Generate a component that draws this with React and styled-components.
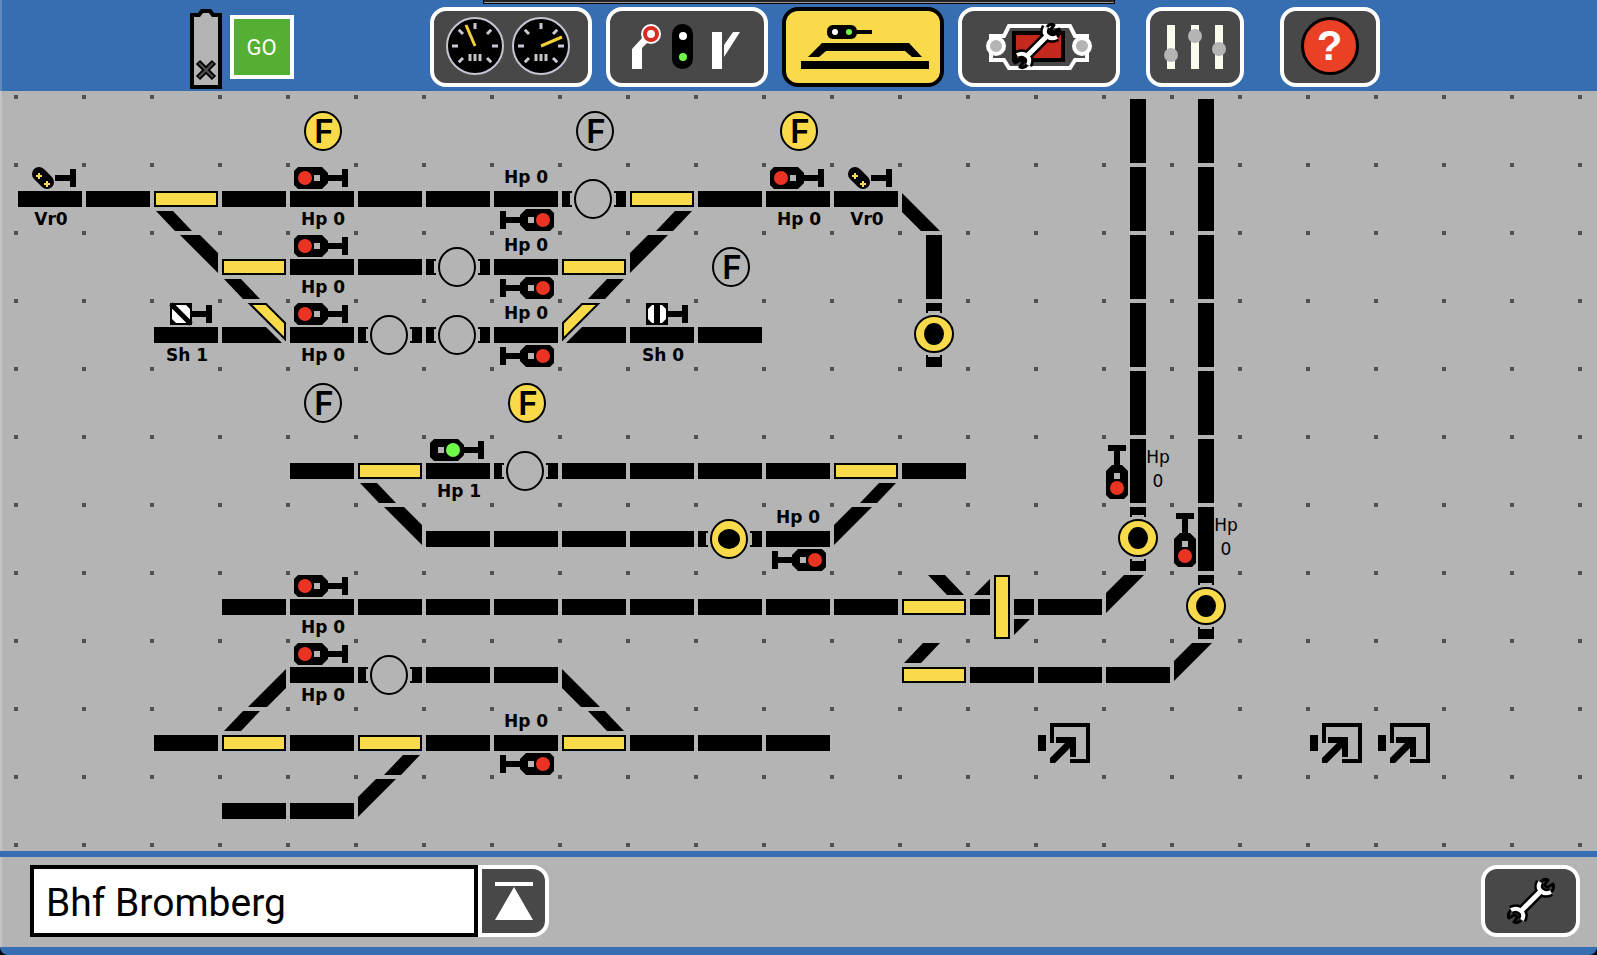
import { useState } from "react";
import styled, { createGlobalStyle } from "styled-components";

const colors = {
  blue: "#376eb1",
  gray: "#b4b4b4",
  dark: "#484848",
  yellow: "#f8da4b",
  red: "#ea3323",
  green: "#6ef84a",
};

const GlobalStyle = createGlobalStyle`
  * {
    box-sizing: border-box;
  }
  body {
    margin: 0;
    background-color: black;
    font-family: "DejaVu Sans", sans-serif;
  }
`

const Screen = styled.div`
  min-height: 100vh;
  display: flex;
  flex-direction: column;
  overflow: hidden;
  background-color: ${colors.gray};
  border-bottom: 8px solid ${colors.blue};
  border-radius: 0 0 8px 8px;
  box-shadow: inset 2px 0 0 rgba(255,255,255,0.2);
`

const Header = styled.header`
  position: relative;
  height: 91px;
  display: flex;
  justify-content: center;
  padding: 7px 28px 0 0;
  background-color: ${colors.blue};
  box-shadow: inset 2px 0 0 rgba(255,255,255,0.2);
`

const Notch = styled.div`
  position: absolute;
  top: 0;
  left: 50%;
  width: 632px;
  height: 4px;
  margin-left: -316px;
  background-color: #222;
  border: 1px solid black;
  border-top: none;
  box-shadow: inset 0 -1px 0 #999;
`

const Status = styled.div`
  display: flex;
  gap: 8px;
  margin-right: 136px;
`

const Battery = styled.svg`
  width: 32px;
  height: 80px;
  margin-top: 2px;
`

const GoButton = styled.button`
  width: 64px;
  height: 64px;
  margin-top: 8px;
  padding: 0;
  background-color: #54af33;
  color: white;
  border: 4px solid white;
  font-family: Roboto, sans-serif;
  font-size: 22px;
  cursor: pointer;
`

const Tabs = styled.nav`
  display: flex;
  gap: 14px;
`

const Tools = styled.div`
  display: flex;
  gap: 36px;
  margin-left: 26px;
`

const IconButton = styled.button`
  width: ${props => props.$width}px;
  height: ${props => props.$height || 80}px;
  display: flex;
  justify-content: center;
  align-items: center;
  flex-shrink: 0;
  padding: 0;
  background-color: ${props => props.$active ? colors.yellow : colors.dark};
  border: 4px solid ${props => props.$active ? "black" : "white"};
  border-radius: ${props => props.$attached ? "0 16px 16px 0" : "16px"};
  cursor: pointer;
`

const HelpMark = styled.span`
  width: 58px;
  height: 58px;
  display: flex;
  justify-content: center;
  align-items: center;
  margin-bottom: 2px;
  background-color: #ea4026;
  color: white;
  border: 3px solid black;
  border-radius: 50%;
  font-size: 42px;
  font-weight: bold;
  line-height: 1;
`

const Yard = styled.main`
  flex: 1;
  display: grid;
  grid-auto-columns: 68px;
  grid-auto-rows: 68px;
  padding: 4px 0 8px 14px;
  overflow: hidden;
  background-image: conic-gradient(at 4px 4px, transparent 270deg, #505050 0);
  background-size: 68px 68px;
  background-position: 14px 4px;
`

const Tile = styled.div`
  display: grid;
  grid-column: ${props => props.$col + 1};
  grid-row: ${props => props.$row + 1};
  width: 68px;
  height: 68px;
  padding: 0;
  background: none;
  border: none;
  color: black;
`

const TileButton = styled(Tile)`
  cursor: pointer;
`

const Drawing = styled.svg`
  grid-area: 1 / 1;
  width: 68px;
  height: 68px;
  overflow: visible;
`

const Label = styled.span`
  grid-area: 1 / 1;
  align-self: ${props => props.$top ? "start" : "end"};
  padding: ${props => props.$top ? "4px 0 0 4px" : "0 0 2px 6px"};
  text-align: center;
  font-family: "DejaVu Sans", sans-serif;
  font-size: 17px;
  font-weight: bold;
  line-height: 20px;
  white-space: nowrap;
`

const SideLabel = styled.span`
  grid-area: 1 / 1;
  align-self: start;
  justify-self: end;
  width: 24px;
  padding-top: 10px;
  text-align: center;
  font-family: "DejaVu Sans", sans-serif;
  font-size: 17px;
  line-height: 24px;
`

const KeyLetter = styled.span`
  grid-area: 1 / 1;
  place-self: center;
  padding: 4px 0 0 8px;
  font-family: Inter, sans-serif;
  font-size: 33px;
  font-weight: 600;
  line-height: 40px;
`

const Footer = styled.footer`
  height: 96px;
  display: flex;
  align-items: flex-start;
  padding: 8px 17px 0 30px;
  border-top: 6px solid ${colors.blue};
`

const NameInput = styled.input`
  width: 448px;
  height: 72px;
  padding: 4px 12px 0;
  background-color: white;
  color: black;
  border: 4px solid black;
  border-radius: 0;
  outline: none;
  font-family: Roboto, sans-serif;
  font-size: 39px;
`

const Spacer = styled.div`
  flex: 1;
`

function Disc({ x, y, width, height, fill }) {
  return (
    <ellipse
      cx={x + width / 2}
      cy={y + height / 2}
      rx={width / 2 - 1}
      ry={height / 2 - 1}
      fill={fill || "black"}
      stroke="black"
      strokeWidth="2"
    />
  )
}

const Mast = () => <path d="M41 12H56V6H62V24H56V18H41Z" />

function MainSignal({ green }) {
  return (
    <g>
      <path d="M12 4H36L42 10V20L36 26H12L8 22V8Z" />
      <Mast />
      <rect x={green ? 16 : 28} y="12" width="6" height="6" fill={colors.gray} />
      <circle cx={green ? 31 : 19} cy="15" r="7" fill={green ? colors.green : colors.red} />
    </g>
  )
}

function DistantSignal() {
  return (
    <g>
      <path d="M25 11L33 19" stroke="black" strokeWidth="14" strokeLinecap="round" />
      <path d="M22 13h6M25 10v6M30 21h6M33 18v6" stroke={colors.yellow} strokeWidth="2" />
      <Mast />
    </g>
  )
}

function ShuntSignal({ open }) {
  return (
    <g>
      <rect x="20" y="4" width="22" height="22" />
      <path d="M26 6H36L40 10V20L36 24H26L22 20V10Z" fill="white" />
      {open
        ? <path d="M21 5L41 25" stroke="black" strokeWidth="5" />
        : <path d="M31 5V25" stroke="black" strokeWidth="6" />}
      <Mast />
    </g>
  )
}

const MIRROR = "translate(72 0) scale(-1 1)";
const FLIP = "translate(0 72) scale(1 -1)";
const ROTATE = "rotate(180 36 36)";

const track = <rect x="4" y="28" width="64" height="16" />;
const column = <rect x="28" y="4" width="16" height="64" />;
const blade = <rect x="5" y="29" width="62" height="14" fill={colors.yellow} stroke="black" strokeWidth="2" />;

const shapes = {
  track,
  column,
  switch: <g>{blade}<path d="M6 48H23L42 68H25Z" /></g>,
  slope: <path d="M30 4H50L68 22V42Z" />,
  bend: <path d="M4 30L42 68H23L4 49Z" />,
  join: (
    <g>
      <path d="M4 28H48L64 44H4Z" />
      <path d="M30 4H48L68 24V42Z" fill={colors.gray} stroke={colors.gray} strokeWidth="2" />
      <path d="M32 5H48L67 24V40Z" fill={colors.yellow} stroke="black" strokeWidth="2" />
    </g>
  ),
  slip: (
    <g>
      <path d="M4 28H24V44H4ZM48 28H68V44H48ZM8 24L24 8V24ZM48 48H64L48 64Z" />
      <rect x="29" y="5" width="14" height="62" fill={colors.yellow} stroke="black" strokeWidth="2" />
    </g>
  ),
  free: (
    <g>
      <path d="M4 28H14V30H12V42H14V44H4ZM68 28H56V30H58V42H56V44H68Z" />
      <Disc x={16} y={16} width={38} height={40} fill={colors.gray} />
    </g>
  ),
  busy: (
    <g>
      <path d="M4 28H14V30H12V42H14V44H4ZM68 28H56V30H58V42H56V44H68Z" />
      <Disc x={16} y={16} width={38} height={40} fill={colors.yellow} />
      <Disc x={24} y={26} width={22} height={20} />
    </g>
  ),
  busyColumn: (
    <g>
      <path d="M28 4V14H30V12H42V14H44V4ZM28 68V56H30V58H42V56H44V68Z" />
      <Disc x={16} y={16} width={40} height={38} fill={colors.yellow} />
      <Disc x={26} y={24} width={20} height={22} />
    </g>
  ),
  hp0: <g>{track}<MainSignal /></g>,
  hp1: <g>{track}<MainSignal green /></g>,
  hpColumn: <g>{column}<g transform="translate(0 72) rotate(-90)"><MainSignal /></g></g>,
  vr0: <g>{track}<DistantSignal /></g>,
  sh0: <g>{track}<ShuntSignal /></g>,
  sh1: <g>{track}<ShuntSignal open /></g>,
  keyOn: <Disc x={18} y={16} width={38} height={40} fill={colors.yellow} />,
  keyOff: <Disc x={18} y={16} width={38} height={40} fill={colors.gray} />,
  link: (
    <g>
      <rect x="4" y="28" width="8" height="16" />
      <path d="M18 36V18H54V54H36" fill="none" stroke="black" strokeWidth="4" />
      <path d="M22 30H42V50H36V41L21 56H16V51L31 36H22Z" />
    </g>
  ),
};

// [row, col, shape, transform, label]
const elements = [
  [0, 4, "keyOn"], [0, 8, "keyOff"], [0, 11, "keyOn"],
  [2, 10, "keyOff"], [4, 4, "keyOff"], [4, 7, "keyOn"],

  [1, 0, "vr0", null, "Vr0"], [1, 2, "switch"], [1, 4, "hp0", null, "Hp 0"],
  [1, 7, "hp0", ROTATE, "Hp 0"], [1, 8, "free"], [1, 9, "switch", MIRROR],
  [1, 11, "hp0", null, "Hp 0"], [1, 12, "vr0", null, "Vr0"], [1, 13, "bend"],

  [2, 2, "slope"], [2, 3, "switch"], [2, 4, "hp0", null, "Hp 0"], [2, 6, "free"],
  [2, 7, "hp0", ROTATE, "Hp 0"], [2, 8, "switch", MIRROR], [2, 9, "slope", MIRROR],
  [2, 13, "column"],

  [3, 2, "sh1", null, "Sh 1"], [3, 3, "join"], [3, 4, "hp0", null, "Hp 0"],
  [3, 5, "free"], [3, 6, "free"], [3, 7, "hp0", ROTATE, "Hp 0"],
  [3, 8, "join", MIRROR], [3, 9, "sh0", null, "Sh 0"], [3, 13, "busyColumn"],

  [5, 5, "switch"], [5, 6, "hp1", null, "Hp 1"], [5, 7, "free"], [5, 12, "switch", MIRROR],

  [6, 5, "slope"], [6, 10, "busy"], [6, 11, "hp0", ROTATE, "Hp 0"], [6, 12, "slope", MIRROR],

  [7, 4, "hp0", null, "Hp 0"], [7, 13, "switch", ROTATE], [7, 14, "slip"], [7, 16, "slope", MIRROR],

  [8, 3, "bend", MIRROR], [8, 4, "hp0", null, "Hp 0"], [8, 5, "free"], [8, 8, "bend"],
  [8, 13, "switch", FLIP], [8, 17, "slope", MIRROR],

  [9, 3, "switch", FLIP], [9, 5, "switch", MIRROR], [9, 7, "hp0", ROTATE, "Hp 0"],
  [9, 8, "switch", ROTATE], [9, 15, "link"], [9, 19, "link"], [9, 20, "link"],

  [10, 5, "slope", MIRROR],

  [5, 16, "hpColumn", null, "Hp 0"], [6, 16, "busyColumn"],
  [6, 17, "hpColumn", null, "Hp 0"], [7, 17, "busyColumn"],
];

// row: columns that hold a plain piece of track
const plainTracks = {
  1: [1, 3, 5, 6, 10],
  2: [5],
  3: [10],
  5: [4, 8, 9, 10, 11, 13],
  6: [6, 7, 8, 9],
  7: [3, 5, 6, 7, 8, 9, 10, 11, 12, 15],
  8: [6, 7, 14, 15, 16],
  9: [2, 4, 6, 9, 10, 11],
  10: [3, 4],
};

Object.entries(plainTracks).forEach(([row, columns]) => {
  columns.forEach((col) => elements.push([Number(row), col, "track"]));
});

for (let row = 0; row < 6; row++) {
  if (row < 5) {
    elements.push([row, 16, "column"]);
  }
  elements.push([row, 17, "column"]);
}

const passive = ["track", "column", "slope", "bend", "free", "busy", "busyColumn"];

function Element({ element }) {
  const [row, col, shape, transform, label] = element;
  const isKey = shape.startsWith("key");
  const Component = passive.includes(shape) ? Tile : TileButton;
  const buttonProps = passive.includes(shape) ? {} : { as: "button", type: "button" };
  if (!label && !isKey && buttonProps.as) {
    buttonProps["aria-label"] = shape;
  }
  return (
    <Component $row={row} $col={col} {...buttonProps}>
      <Drawing viewBox="0 0 68 68" aria-hidden="true">
        <g transform={transform || undefined}>{shapes[shape]}</g>
      </Drawing>
      {isKey && <KeyLetter>F</KeyLetter>}
      {label && shape === "hpColumn" && <SideLabel>{label}</SideLabel>}
      {label && shape !== "hpColumn" && <Label $top={transform === ROTATE}>{label}</Label>}
    </Component>
  )
}

function Wrench() {
  const jaw = "M33 5Q30 11 34 14Q38 18 44 15";
  const hooks = "M34 5Q37 1 41 3L38 7Q38 10 41 10L46 7Q48 11 44 15";
  return (
    <g fill="none" strokeLinejoin="round">
      <g stroke="black">
        <path d="M14 34L34 14" strokeWidth="10" />
        <path d={jaw} strokeWidth="9" />
        <path d={jaw} strokeWidth="9" transform="rotate(180 24 24)" />
        <path d={hooks} strokeWidth="3" />
        <path d={hooks} strokeWidth="3" transform="rotate(180 24 24)" />
      </g>
      <g stroke="white" strokeWidth="4">
        <path d="M14 34L34 14" strokeWidth="5" />
        <path d={jaw} />
        <path d={jaw} transform="rotate(180 24 24)" />
      </g>
    </g>
  )
}

function Gauge({ x, needle }) {
  return (
    <g transform={`translate(${x} 39)`}>
      <circle r="28" fill="black" stroke="#c4c4d2" strokeWidth="2" />
      {[-135, -90, -45, 0, 45, 90, 135].map((angle) => (
        <path key={angle} d="M0 -23V-17" stroke="#c8c8d4" strokeWidth="3" transform={`rotate(${angle})`} />
      ))}
      <path d="M-5 8V15M0 8V15M5 8V15" stroke="#c4c4c4" strokeWidth="3" />
      <path d={`M0 0L${needle}`} stroke="#f3cf35" strokeWidth="3" />
    </g>
  )
}

const tabs = [
  {
    id: "drive",
    icon: <g><Gauge x={45} needle="-9 -21" /><Gauge x={111} needle="21 -9" /></g>
  },
  {
    id: "accessories",
    icon: (
      <g>
        <path d="M26 42L37 30L42 35L36 41V62H26Z" fill="white" />
        <circle cx="45" cy="27" r="10" fill="white" />
        <circle cx="45" cy="27" r="6" fill="white" stroke="#d92c21" strokeWidth="4" />
        <rect x="66" y="17" width="21" height="45" rx="10" />
        <circle cx="77" cy="29" r="4" fill="white" />
        <circle cx="77" cy="50" r="4" fill={colors.green} />
        <path d="M106 25H116V62H106ZM118 38L127 25H134L118 50Z" fill="white" />
      </g>
    )
  },
  {
    id: "layout",
    icon: (
      <g>
        <rect x="45" y="18" width="30" height="14" rx="6" />
        <rect x="75" y="23" width="15" height="4" />
        <circle cx="53" cy="25" r="3" fill="white" />
        <circle cx="67" cy="25" r="3" fill={colors.green} />
        <path d="M26 50L40 36H127L140 50H130L123 44H44L37 50Z" />
        <rect x="19" y="54" width="128" height="8" />
      </g>
    )
  },
  {
    id: "setup",
    icon: (
      <g transform="translate(-12 0)">
        <path
          d="M45 29H58L63 19H124L129 29H141V53H129L124 61H63L58 53H45Z"
          fill={colors.dark}
          stroke="white"
          strokeWidth="4"
        />
        <circle cx="50" cy="39" r="8" fill={colors.gray} stroke="white" strokeWidth="4" />
        <circle cx="136" cy="39" r="8" fill={colors.gray} stroke="white" strokeWidth="4" />
        <rect x="68" y="26" width="49" height="27" fill="#c5281c" stroke="black" strokeWidth="4" />
        <g transform="translate(67 15)"><Wrench /></g>
      </g>
    )
  },
];

export default function App() {
  const [activeTab, setActiveTab] = useState("layout");
  const [name, setName] = useState("Bhf Bromberg");

  return (
    <>
      <GlobalStyle />
      <Screen>
        <Header>
          <Notch />
          <Status>
            <Battery viewBox="0 0 32 80" aria-label="battery">
              <path d="M2 6H9L12 2H20L23 6H30V78H2Z" fill={colors.gray} stroke="black" strokeWidth="4" />
              <path d="M8 53L24 69M24 53L8 69" stroke="black" strokeWidth="6" />
              <path d="M9 54L23 68M23 54L9 68" stroke="#505050" strokeWidth="2" />
            </Battery>
            <GoButton type="button">GO</GoButton>
          </Status>
          <Tabs>
            {tabs.map((tab) => (
              <IconButton
                key={tab.id}
                type="button"
                aria-label={tab.id}
                $width={162}
                $active={tab.id === activeTab}
                onClick={() => setActiveTab(tab.id)}
              >
                <svg width="154" height="72" viewBox="4 4 154 72">{tab.icon}</svg>
              </IconButton>
            ))}
          </Tabs>
          <Tools>
            <IconButton type="button" aria-label="settings" $width={98}>
              <svg width="90" height="72" viewBox="4 4 90 72">
                <path d="M21 18H29V62H21ZM45 18H53V62H45ZM69 18H77V62H69Z" fill="#fbfbee" />
                <g fill={colors.gray}>
                  <circle cx="25" cy="48" r="7" />
                  <circle cx="49" cy="29" r="7" />
                  <circle cx="73" cy="42" r="7" />
                </g>
              </svg>
            </IconButton>
            <IconButton type="button" aria-label="help" $width={100}>
              <HelpMark>?</HelpMark>
            </IconButton>
          </Tools>
        </Header>
        <Yard>
          {elements.map((element) => (
            <Element key={element[0] + "-" + element[1]} element={element} />
          ))}
        </Yard>
        <Footer>
          <NameInput aria-label="layout name" value={name} onChange={(e) => setName(e.target.value)} />
          <IconButton type="button" aria-label="open list" $width={71} $height={72} $attached>
            <svg width="38" height="38" viewBox="0 0 38 38" fill="white">
              <path d="M0 0H38V4H0ZM19 5L38 38H0Z" />
            </svg>
          </IconButton>
          <Spacer />
          <IconButton type="button" aria-label="edit" $width={99} $height={72}>
            <svg width="48" height="48" viewBox="0 0 48 48"><Wrench /></svg>
          </IconButton>
        </Footer>
      </Screen>
    </>
  )
}
